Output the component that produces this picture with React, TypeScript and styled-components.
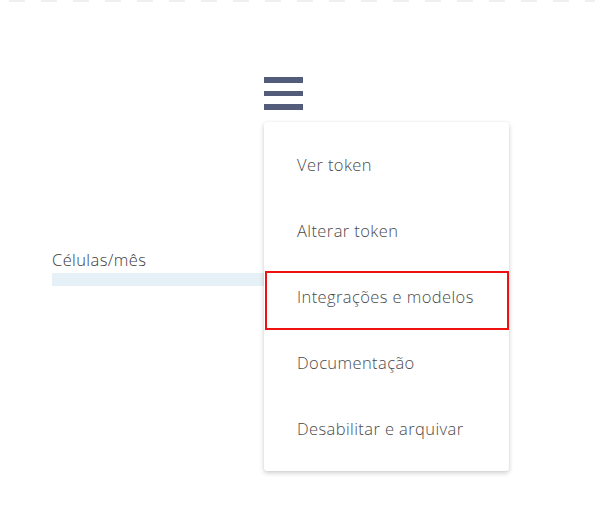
import React from "react";
import styled, { createGlobalStyle } from "styled-components";

const GlobalStyle = createGlobalStyle`
  html, body {
    margin: 0;
    padding: 0;
    background: #ffffff;
    font-family: "Open Sans", "Noto Sans", sans-serif;
  }
`;

const Page = styled.div`
  position: relative;
  width: 595px;
  height: 527px;
  overflow: hidden;
  background: #ffffff;
`;

const DashedEdge = styled.div`
  height: 2px;
  margin-left: 9px;
  background: repeating-linear-gradient(
    to right,
    #efefef 0,
    #efefef 16px,
    transparent 16px,
    transparent 32px
  );
`;

const Toolbar = styled.div`
  display: flex;
  padding-left: 264px;
  padding-top: 75px;
`;

const MenuAnchor = styled.div`
  position: relative;
`;

const Hamburger = styled.button`
  display: flex;
  flex-direction: column;
  gap: 8px;
  width: 39px;
  padding: 0;
  border: 0;
  background: transparent;
  cursor: pointer;
`;

const Bar = styled.span`
  display: block;
  height: 5.5px;
  background: #545c7b;
`;

const Dropdown = styled.ul`
  position: absolute;
  top: 45px;
  left: 0;
  z-index: 2;
  width: 245px;
  margin: 0;
  padding: 10px 0 9px;
  list-style: none;
  background: #ffffff;
  border-radius: 3px;
  box-shadow: 0 2px 5px rgba(0, 0, 0, 0.2), 0 0 2px rgba(0, 0, 0, 0.06);
`;

const Item = styled.li<{ $highlighted?: boolean }>`
  position: relative;
  height: 66px;
  padding-left: 33px;
  font-size: 16.5px;
  font-weight: 300;
  letter-spacing: 0.4px;
  line-height: 66px;
  color: #4a4a4a;
  white-space: nowrap;

  ${(p) =>
    p.$highlighted &&
    `
    &::after {
      content: "";
      position: absolute;
      top: 7px;
      left: 1px;
      right: 0;
      bottom: 0;
      border: 2px solid #ee1111;
    }
  `}
`;

const Field = styled.div`
  display: flex;
  flex-direction: column;
  padding-left: 52px;
  margin-top: 139px;
`;

const Label = styled.span`
  font-size: 16.5px;
  font-weight: 300;
  letter-spacing: 0.4px;
  line-height: 21px;
  color: #3a3a3a;
`;

const Track = styled.div`
  width: 240px;
  height: 13px;
  margin-top: 3px;
  background: #e6f0f7;
`;

const items = [
  "Ver token",
  "Alterar token",
  "Integrações e modelos",
  "Documentação",
  "Desabilitar e arquivar",
];

export default function App() {
  return (
    <Page>
      <GlobalStyle />
      <DashedEdge />
      <Toolbar>
        <MenuAnchor>
          <Hamburger aria-label="Menu">
            <Bar />
            <Bar />
            <Bar />
          </Hamburger>
          <Dropdown>
            {items.map((t, i) => (
              <Item key={t} $highlighted={i === 2}>
                {t}
              </Item>
            ))}
          </Dropdown>
        </MenuAnchor>
      </Toolbar>
      <Field>
        <Label>Células/mês</Label>
        <Track />
      </Field>
    </Page>
  );
}
